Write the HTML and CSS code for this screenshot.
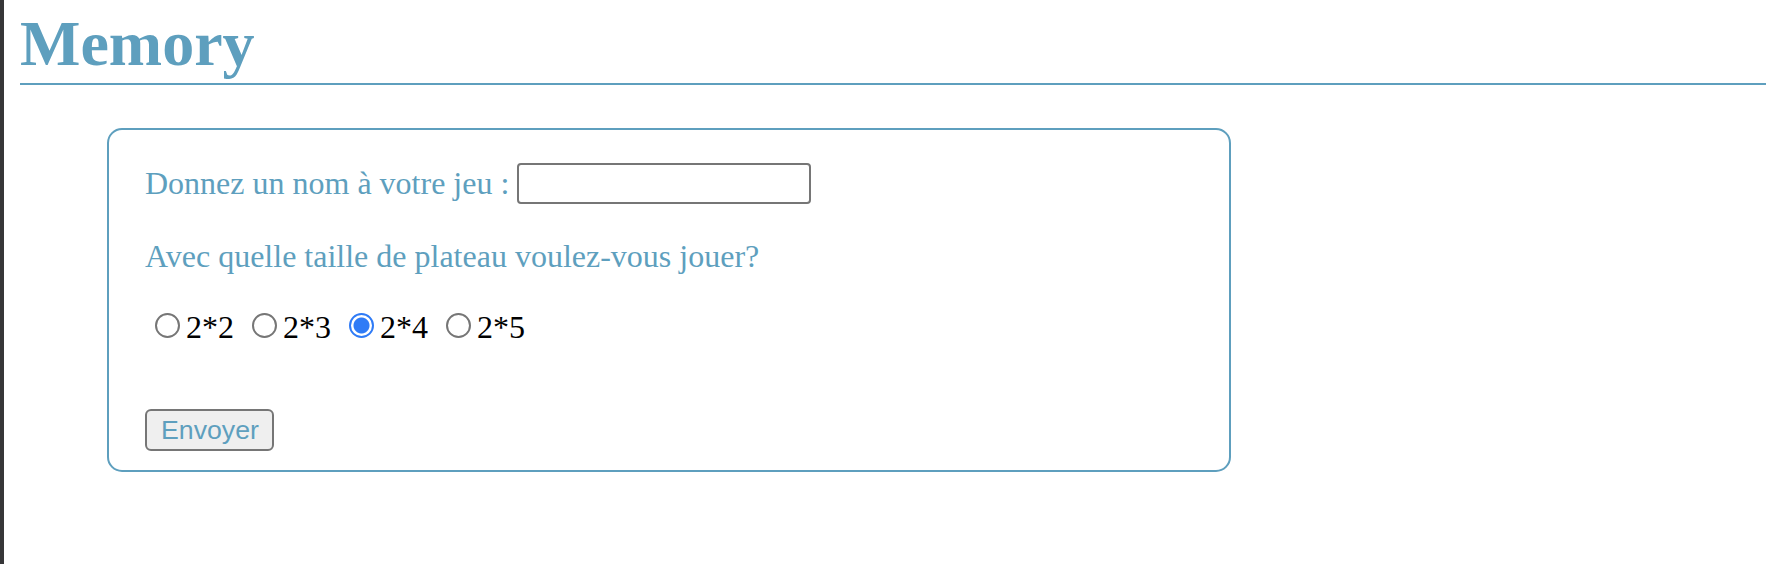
FILE: index.html
```html
<!DOCTYPE html>
<html lang="fr">
<head>
<meta charset="utf-8">
<title>Memory</title>
<link rel="stylesheet" href="styles.css">
</head>
<body>
  <h1 class="title">Memory</h1>
  <form class="card">
    <div class="row-name">
      <label class="label" for="nom">Donnez un nom à votre jeu :</label>
      <input class="text-input" type="text" id="nom" name="nom">
    </div>
    <p class="question">Avec quelle taille de plateau voulez-vous jouer?</p>
    <div class="radios"><input class="radio" type="radio" name="taille" value="2"><span class="opt">2*2</span> <input class="radio" type="radio" name="taille" value="3"><span class="opt">2*3</span> <input class="radio" type="radio" name="taille" value="4" checked><span class="opt">2*4</span> <input class="radio" type="radio" name="taille" value="5"><span class="opt">2*5</span></div>
    <div class="actions">
      <button class="submit" type="button">Envoyer</button>
    </div>
  </form>
</body>
</html>
```

FILE: styles.css
```css
html, body {
  height: 100%;
}

body {
  margin: 0;
  box-sizing: border-box;
  border-left: 4px solid #363638;
  padding: 7px 12px 0 16px;
  font-family: "Liberation Serif", "Times New Roman", serif;
  font-size: 32px;
  color: #5e9fbe;
  background: #ffffff;
}

.title {
  margin: 0;
  font-size: 64px;
  font-weight: bold;
  line-height: 74px;
  padding-bottom: 2px;
  border-bottom: 2px solid #5e9fbe;
  color: #5e9fbe;
}

.card {
  margin: 43px 0 0 87px;
  width: 1124px;
  box-sizing: border-box;
  border: 2px solid #5e9fbe;
  border-radius: 15px;
  padding: 33px 36px 19px 36px;
  display: flex;
  flex-direction: column;
}

.row-name {
  display: flex;
  align-items: center;
  gap: 8px;
  height: 41px;
}

.label {
  line-height: 37px;
}

.text-input {
  width: 294px;
  height: 41px;
  box-sizing: border-box;
  margin: 0;
  border: 2px solid #767676;
  border-radius: 4px;
  background: #fff;
  font-size: 26px;
  padding: 2px 4px;
}

.question {
  margin: 34px 0 0 0;
  line-height: 37px;
  height: 37px;
}

.radios {
  margin-top: 34px;
  line-height: 37px;
  height: 37px;
  color: #000;
  white-space: nowrap;
}

.radio {
  -webkit-appearance: none;
  appearance: none;
  display: inline-block;
  width: 25px;
  height: 25px;
  box-sizing: border-box;
  margin: 0 6px 0 10px;
  border: 2px solid #767676;
  border-radius: 50%;
  background: #fff;
  vertical-align: baseline;
}

.radio:checked {
  border-color: #2f7bf6;
  background: radial-gradient(circle, #2f7bf6 0 7.5px, #ffffff 8.5px);
}

.opt {
  color: #000;
}

.actions {
  margin-top: 63px;
  display: flex;
}

.submit {
  margin: 0;
  width: 129px;
  height: 42px;
  box-sizing: border-box;
  border: 2px solid #767676;
  border-radius: 6px;
  background: #efefef;
  color: #5e9fbe;
  font-family: "Liberation Sans", Arial, Helvetica, sans-serif;
  font-size: 26.7px;
  padding: 0 12px 0 14px;
  text-align: left;
  line-height: 38px;
}
```
